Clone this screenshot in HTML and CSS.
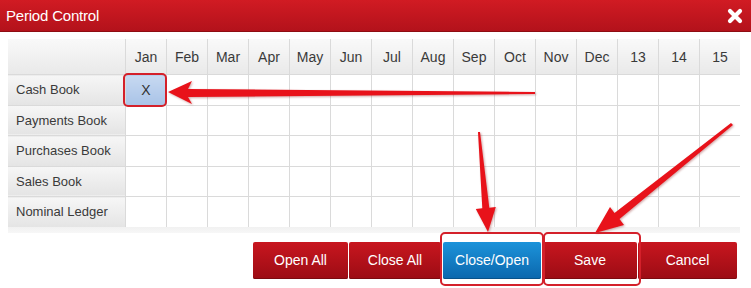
FILE: index.html
```html
<!DOCTYPE html>
<html lang="en">
<head>
    <meta charset="UTF-8">
    <title>Period Control</title>
    <link rel="stylesheet" href="styles.css">
</head>
<body>

    <div class="dialog">
        <div class="titlebar">
            <span class="title">Period Control</span>
            <svg class="close" width="16" height="16" viewBox="0 0 16 16">
                <path d="M3 3 L13 13 M13 3 L3 13" stroke="#fff" stroke-width="4.2" stroke-linecap="round"/>
            </svg>
        </div>

        <div class="content">
            <div class="grid-wrap">
                <table class="periods">
                    <thead>
                        <tr>
                            <th class="corner"></th>
                            <th>Jan</th><th>Feb</th><th>Mar</th><th>Apr</th><th>May</th><th>Jun</th>
                            <th>Jul</th><th>Aug</th><th>Sep</th><th>Oct</th><th>Nov</th><th>Dec</th>
                            <th>13</th><th>14</th><th>15</th>
                        </tr>
                    </thead>
                    <tbody id="periodRows"></tbody>
                </table>
            </div>

            <div class="actions">
                <button class="btn btn-open">Open All</button>
                <button class="btn btn-closeall">Close All</button>
                <button class="btn btn-blue btn-toggle">Close/Open</button>
                <button class="btn btn-save">Save</button>
                <button class="btn btn-cancel">Cancel</button>
            </div>
        </div>

        <!-- screenshot annotations -->
        <svg class="marks" width="751" height="288" viewBox="0 0 751 288">
            <g fill="#e8121a" class="arrows">
                <polygon points="168,92 192,81 188,89 535,92 535,94 188,97 192,104"/>
                <polygon points="478,132 482.3,208.3 475.8,209 488,232 495.8,207 489.3,207.7 480,132"/>
                <polygon points="731,123 614.5,213 610,207 595,233 624,225 619.5,219 733,125"/>
            </g>
            <g fill="none" stroke="#d4202a" stroke-width="2">
                <rect x="124" y="74" width="42" height="32" rx="4"/>
                <rect x="441" y="233" width="102" height="52" rx="4"/>
                <rect x="544" y="233" width="96" height="52" rx="4"/>
            </g>
        </svg>
    </div>

    <script>
        const books = ["Cash Book", "Payments Book", "Purchases Book", "Sales Book", "Nominal Ledger"];
        const body = document.getElementById("periodRows");

        books.forEach((name, row) => {
            const tr = document.createElement("tr");
            let html = `<td class="book">${name}</td>`;
            for (let p = 0; p < 15; p++) {
                if (row === 0 && p === 0) {
                    html += `<td class="closed">X</td>`;
                } else {
                    html += `<td></td>`;
                }
            }
            tr.innerHTML = html;
            body.appendChild(tr);
        });
    </script>

</body>
</html>
```

FILE: styles.css
```css
body {
    font-family: "Liberation Sans", Arial, sans-serif;
    background-color: #fff;
    color: #333;
    margin: 0;
    padding: 0;
}
.dialog {
    position: relative;
    width: 751px;
    height: 288px;
    overflow: hidden;
    background-color: #fff;
}
.titlebar {
    height: 32px;
    display: flex;
    align-items: center;
    justify-content: space-between;
    padding: 0 8px 0 6px;
    background: linear-gradient(#d11b23, #b3121b);
    border-bottom: 1px solid #8e0d13;
    box-sizing: border-box;
}
.title {
    color: #fff;
    font-size: 15px;
    letter-spacing: -0.2px;
}
.close {
    display: block;
    margin-top: 1px;
}
.content {
    padding: 7px 11px 0 8px;
}
.grid-wrap {
    width: 732px;
    padding-bottom: 6px;
    background: linear-gradient(to bottom, #fff 0, #fff calc(100% - 6px), #f1f1f1 calc(100% - 6px), #f7f7f7 100%);
}
.periods {
    border-collapse: collapse;
    table-layout: fixed;
    width: 732px;
}
.periods th, .periods td {
    border: 1px solid #dadada;
    padding: 0;
    text-align: center;
}
.periods tr > :first-child {
    border-left: none;
}
.periods tr > :last-child {
    border-right: none;
}
.periods thead th {
    height: 35px;
    border-top: none;
    font-weight: normal;
    font-size: 14px;
    color: #3a3a3a;
    background: linear-gradient(#f9f9f9, #e9e9e9);
    width: 40px;
}
.periods thead th.corner {
    width: 117px;
}
.periods td {
    height: 29.5px;
    font-size: 14px;
}
.periods td.book {
    text-align: left;
    padding-left: 8px;
    font-size: 13px;
    color: #3a3a3a;
    background: linear-gradient(#f6f6f6, #e4e4e4);
}
.periods td.closed {
    background: linear-gradient(#c7d9f1, #a9c3e7);
    color: #333;
}
.periods tbody tr:last-child td {
    border-bottom: none;
}
.actions {
    display: flex;
    justify-content: flex-end;
    gap: 1px;
    margin-top: 9px;
    padding-right: 3px;
}
.btn {
    height: 37px;
    border: none;
    border-radius: 2px;
    color: #fff;
    font-family: "Liberation Sans", Arial, sans-serif;
    font-size: 14px;
    padding: 0;
    background: linear-gradient(#c8161f, #9c0c14);
    box-shadow: inset 0 -1px 0 #7c0a0f;
    cursor: pointer;
}
.btn:hover {
    background: linear-gradient(#d01c25, #a40f17);
}
.btn-blue {
    background: linear-gradient(#1c93da, #0b67ad);
    box-shadow: inset 0 -1px 0 #08528a;
}
.btn-open { width: 95px; }
.btn-closeall { width: 92px; }
.btn-toggle { width: 98px; margin: 0 1px; }
.btn-save { width: 94px; }
.btn-cancel { width: 99px; }
.marks {
    position: absolute;
    left: 0;
    top: 0;
    pointer-events: none;
}
.arrows {
    filter: drop-shadow(1px 1px 1px rgba(120, 0, 0, 0.35));
}
```
